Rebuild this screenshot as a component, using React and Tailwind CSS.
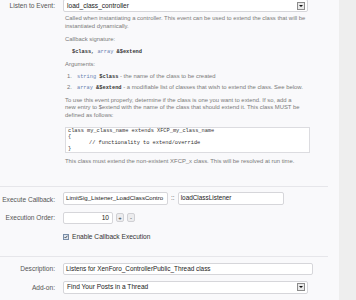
import React from 'react';

const Label = ({ children, className = '' }) => (
    <div className={`w-[55px] shrink-0 text-right text-[6.6px] text-[#555] ${className}`}>{children}</div>
);

const Arrow = () => (
    <span className="flex h-[8px] w-[8px] items-center justify-center border border-[#8c8c8c] bg-[#e9e9e9]">
        <svg width="4" height="2" viewBox="0 0 4 2">
            <path d="M0 0h4L2 2z" fill="#111" />
        </svg>
    </span>
);

const Select = ({ value, className = '' }) => (
    <div className={`flex h-[13px] w-[245px] items-center justify-between rounded-[2px] border border-[#d6d6da] bg-white pl-[3px] pr-[2px] text-[6.6px] text-[#222] ${className}`}>
        <span>{value}</span>
        <Arrow />
    </div>
);

const Input = ({ value, className = '' }) => (
    <div className={`flex items-center overflow-hidden whitespace-nowrap rounded-[2px] border border-[#d6d6da] bg-white px-[2px] text-[#222] ${className}`}>
        {value}
    </div>
);

const Spin = ({ children }) => (
    <span className="flex h-[9px] w-[8px] items-center justify-center rounded-[2px] border border-[#d0d0d4] bg-[#ececee] text-[6px] leading-none text-[#333]">
        {children}
    </span>
);

const mono = "font-['Liberation_Mono',monospace]";

export default function App() {
    return (
        <div className="flex h-[300px] w-[356px] overflow-hidden bg-[#eeeeee] font-['Liberation_Sans',Arial,sans-serif]">
            <div className="w-[339px] shrink-0 bg-[#f9f9fb]">
                {/* Listen to Event */}
                <div className="flex">
                    <Label className="leading-[12px]">Listen to Event:</Label>
                    <div className="ml-[8px] w-[260px]">
                        <Select value="load_class_controller" className="-mt-[1px]" />
                        <div className="pl-[2px] text-[5.9px] leading-[7.5px] text-[#7a7a7a]">
                            <p className="mt-[3px] w-[245px]">
                                Called when instantiating a controller. This event can be used to extend the class that will be instantiated dynamically.
                            </p>
                            <p className="mt-[6px]">Callback signature:</p>
                            <p className={`ml-[7px] mt-[5px] text-[5.3px] text-[#333] ${mono}`}>
                                <b>$class</b>, <span className="text-[#6a7fb0]">array</span> <b>&amp;$extend</b>
                            </p>
                            <p className="mt-[5px]">Arguments:</p>
                            <ol className="mt-[4px] whitespace-nowrap pl-[2px]">
                                <li className="flex">
                                    <span className="w-[10px]">1.</span>
                                    <span>
                                        <span className={`text-[5.3px] ${mono}`}>
                                            <span className="text-[#6a7fb0]">string</span> <b className="text-[#333]">$class</b>
                                        </span>{' '}
                                        - the name of the class to be created
                                    </span>
                                </li>
                                <li className="mt-[3px] flex">
                                    <span className="w-[10px]">2.</span>
                                    <span>
                                        <span className={`text-[5.3px] ${mono}`}>
                                            <span className="text-[#6a7fb0]">array</span> <b className="text-[#333]">&amp;$extend</b>
                                        </span>{' '}
                                        - a modifiable list of classes that wish to extend the class. See below.
                                    </span>
                                </li>
                            </ol>
                            <p className="mt-[4px] w-[238px]">
                                To use this event properly, determine if the class is one you want to extend. If so, add a new entry to $extend with the name of the class that should extend it. This class MUST be defined as follows:
                            </p>
                            <div className={`mt-[8px] w-[245px] border border-[#dcdce0] bg-white pl-[2px] text-[5.3px] leading-[6px] text-[#333] ${mono}`}>
                                <div>class my_class_name extends XFCP_my_class_name</div>
                                <div>{'{'}</div>
                                <div className="pl-[21px]">// functionality to extend/override</div>
                                <div>{'}'}</div>
                            </div>
                            <p className="mt-[5px]">This class must extend the non-existent XFCP_x class. This will be resolved at run time.</p>
                        </div>
                    </div>
                </div>

                <div className="mt-[20px] h-px w-[328px] bg-[#e6e6ea]" />

                {/* Execute Callback */}
                <div className="mt-[5px] flex">
                    <Label className="pt-[2px] leading-[11px]">Execute Callback:</Label>
                    <div className="ml-[8px] flex items-center gap-[3px]">
                        <Input value="LimitSig_Listener_LoadClassContro" className="h-[13px] w-[105px] text-[6.1px]" />
                        <span className="text-[6.6px] text-[#555]">::</span>
                        <Input value="loadClassListener" className="h-[13px] w-[106px] text-[6.4px]" />
                    </div>
                </div>

                {/* Execution Order */}
                <div className="mt-[7px] flex">
                    <Label className="leading-[12px]">Execution Order:</Label>
                    <div className="ml-[8px] flex items-center gap-[3px]">
                        <Input value="10" className="h-[12px] w-[50px] justify-end pr-[3px] text-[6.6px]" />
                        <Spin>+</Spin>
                        <Spin>-</Spin>
                    </div>
                </div>

                <div className="mt-[9px] flex items-center pl-[63px] text-[6.6px] leading-[8px] text-[#333]">
                    <span className="flex h-[6px] w-[6px] items-center justify-center border border-[#7a8ea8] bg-[#dfe6ef]">
                        <svg width="4" height="4" viewBox="0 0 4 4">
                            <path d="M0.5 2l1 1L3.5 0.7" fill="none" stroke="#333" strokeWidth="0.8" />
                        </svg>
                    </span>
                    <span className="ml-[3px]">Enable Callback Execution</span>
                </div>

                <div className="mt-[15px] h-px w-[328px] bg-[#e6e6ea]" />

                {/* Description */}
                <div className="mt-[6px] flex">
                    <Label className="leading-[12px]">Description:</Label>
                    <Input value="Listens for XenForo_ControllerPublic_Thread class" className="ml-[8px] h-[12px] w-[250px] text-[6.4px]" />
                </div>

                {/* Add-on */}
                <div className="mt-[6px] flex">
                    <Label className="leading-[13px]">Add-on:</Label>
                    <Select value="Find Your Posts in a Thread" className="ml-[8px]" />
                </div>
            </div>
            <div className="flex-1" />
        </div>
    );
}
